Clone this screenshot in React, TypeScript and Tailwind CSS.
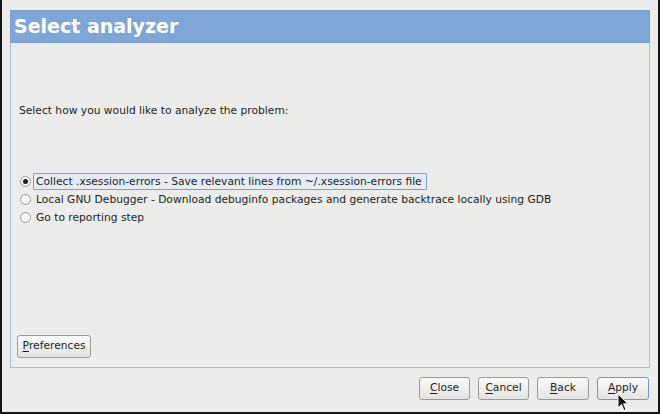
import type { FC, ReactElement } from "react";

const font = { fontFamily: '"DejaVu Sans", Verdana, sans-serif' };

const Radio: FC<{ checked?: boolean }> = ({ checked }): ReactElement => (
  <span className="w-[11px] h-[11px] rounded-full border border-[#9a9c97] bg-[#f7f7f6] flex items-center justify-center shrink-0">
    {checked && <span className="w-[5px] h-[5px] rounded-full bg-[#1e1e1e]" />}
  </span>
);

const DlgButton: FC<{ label: string; mnemonic: number; focused?: boolean; width: string }> = ({
  label,
  mnemonic,
  focused,
  width,
}): ReactElement => (
  <button
    className={`${width} h-[23px] rounded-[3px] border text-[10.7px] text-[#1e1e1e] bg-gradient-to-b from-[#fafaf9] to-[#e3e4e1] flex items-center justify-center ${
      focused ? "border-[#6f98cf]" : "border-[#9a9c97]"
    }`}
  >
    {label.slice(0, mnemonic)}
    <span className="underline underline-offset-2">{label[mnemonic]}</span>
    {label.slice(mnemonic + 1)}
  </button>
);

export default function App(): ReactElement {
  const options = [
    "Collect .xsession-errors - Save relevant lines from ~/.xsession-errors file",
    "Local GNU Debugger - Download debuginfo packages and generate backtrace locally using GDB",
    "Go to reporting step",
  ];

  return (
    <div
      className="relative w-[660px] h-[414px] bg-[#ecedea] border-l-2 border-r-2 border-b-2 border-[#151515] flex flex-col"
      style={font}
    >
      <div className="mx-[8px] mt-[10px] h-[33px] bg-[#7fa6d8] border border-[#7aa0d2] flex items-center px-[3px]">
        <span className="text-white font-bold text-[19px] leading-none">Select analyzer</span>
      </div>

      <div className="mx-[8px] h-[325px] border-l border-r border-b border-[#a7c0e2] flex flex-col px-[8px]">
        <p className="mt-[61px] text-[10.7px] text-[#1e1e1e] leading-[14px]">
          Select how you would like to analyze the problem:
        </p>

        <div className="mt-[56px] flex flex-col gap-[4px]">
          {options.map((opt, i) => (
            <div key={opt} className="flex items-center gap-[2px] h-[14px] ml-[1px]">
              <Radio checked={i === 0} />
              <span
                className={`text-[10.7px] text-[#1e1e1e] leading-[13px] pl-[2px] ${
                  i === 0
                    ? "border border-[#7fa0cc] bg-[#e7ecf3] rounded-[1px] py-[1px] -my-[2px] pr-[4px]"
                    : "border border-transparent pr-[2px]"
                }`}
              >
                {opt}
              </span>
            </div>
          ))}
        </div>

        <div className="mt-auto mb-[9px] -ml-[2px]">
          <DlgButton label="Preferences" mnemonic={0} width="w-[74px]" />
        </div>
      </div>

      <div className="flex justify-end gap-[8px] mt-[9px] mr-[9px]">
        <DlgButton label="Close" mnemonic={0} width="w-[51px]" />
        <DlgButton label="Cancel" mnemonic={0} width="w-[51px]" />
        <DlgButton label="Back" mnemonic={0} width="w-[52px]" />
        <DlgButton label="Apply" mnemonic={0} width="w-[52px]" focused />
      </div>

      {/* mouse pointer */}
      <svg className="absolute left-[615px] top-[393px]" width="12" height="19" viewBox="0 0 12 19">
        <path d="M1 1 L1 15 L4.5 11.5 L7 17.5 L9 16.6 L6.6 10.8 L11 10.8 Z" fill="#111" stroke="#fff" strokeWidth="1" />
      </svg>
    </div>
  );
}
